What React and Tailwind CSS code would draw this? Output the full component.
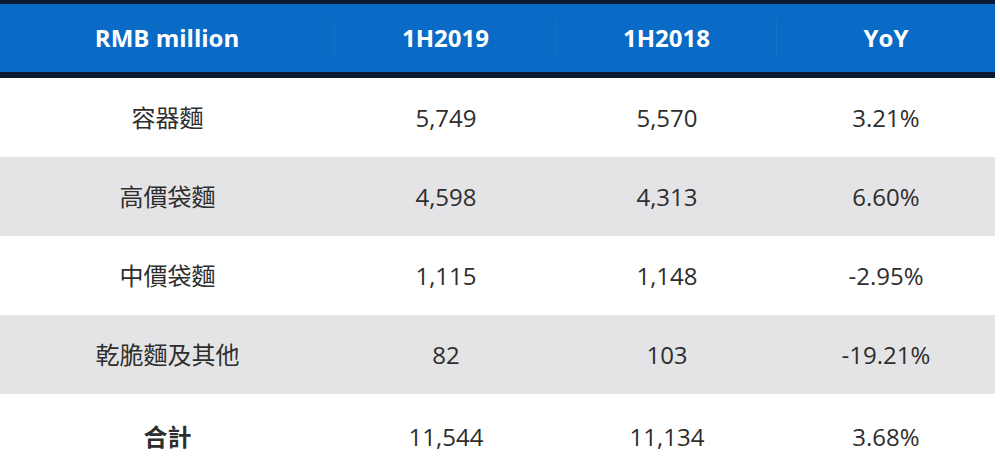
const rows = [
  { name: "容器麵", a: "5,749", b: "5,570", yoy: "3.21%" },
  { name: "高價袋麵", a: "4,598", b: "4,313", yoy: "6.60%" },
  { name: "中價袋麵", a: "1,115", b: "1,148", yoy: "-2.95%" },
  { name: "乾脆麵及其他", a: "82", b: "103", yoy: "-19.21%" },
];

const font = { fontFamily: '"Open Sans", "Noto Sans CJK TC", sans-serif' };
const cols = "grid grid-cols-[335px_222px_220px_218px]";

export default function App() {
  return (
    <div className="w-[1000px] h-[463px] overflow-hidden bg-white" style={font}>
      <div className="w-[995px]">
        <div className="border-t-4 border-b-[6px] border-[#0b1a33] bg-[#0a6bc6]">
          <div className={`${cols} h-[68px] items-center text-white font-bold text-[24px]`}>
            <div className="text-center border-r border-[#1a72c8]">RMB million</div>
            <div className="text-center border-r border-[#1a72c8]">1H2019</div>
            <div className="text-center border-r border-[#1a72c8]">1H2018</div>
            <div className="text-center">YoY</div>
          </div>
        </div>
        {rows.map((r, i) => (
          <div key={r.name} className={`${cols} h-[79px] items-center text-[24px] text-[#2e2e2e] ${i % 2 ? "bg-[#e4e4e6]" : "bg-white"}`}>
            <div className="text-center">{r.name}</div>
            <div className="text-center">{r.a}</div>
            <div className="text-center">{r.b}</div>
            <div className="text-center">{r.yoy}</div>
          </div>
        ))}
        <div className={`${cols} h-[79px] items-center text-[24px] text-[#2e2e2e] pt-[6px]`}>
          <div className="text-center font-bold">合計</div>
          <div className="text-center">11,544</div>
          <div className="text-center">11,134</div>
          <div className="text-center">3.68%</div>
        </div>
      </div>
    </div>
  );
}
